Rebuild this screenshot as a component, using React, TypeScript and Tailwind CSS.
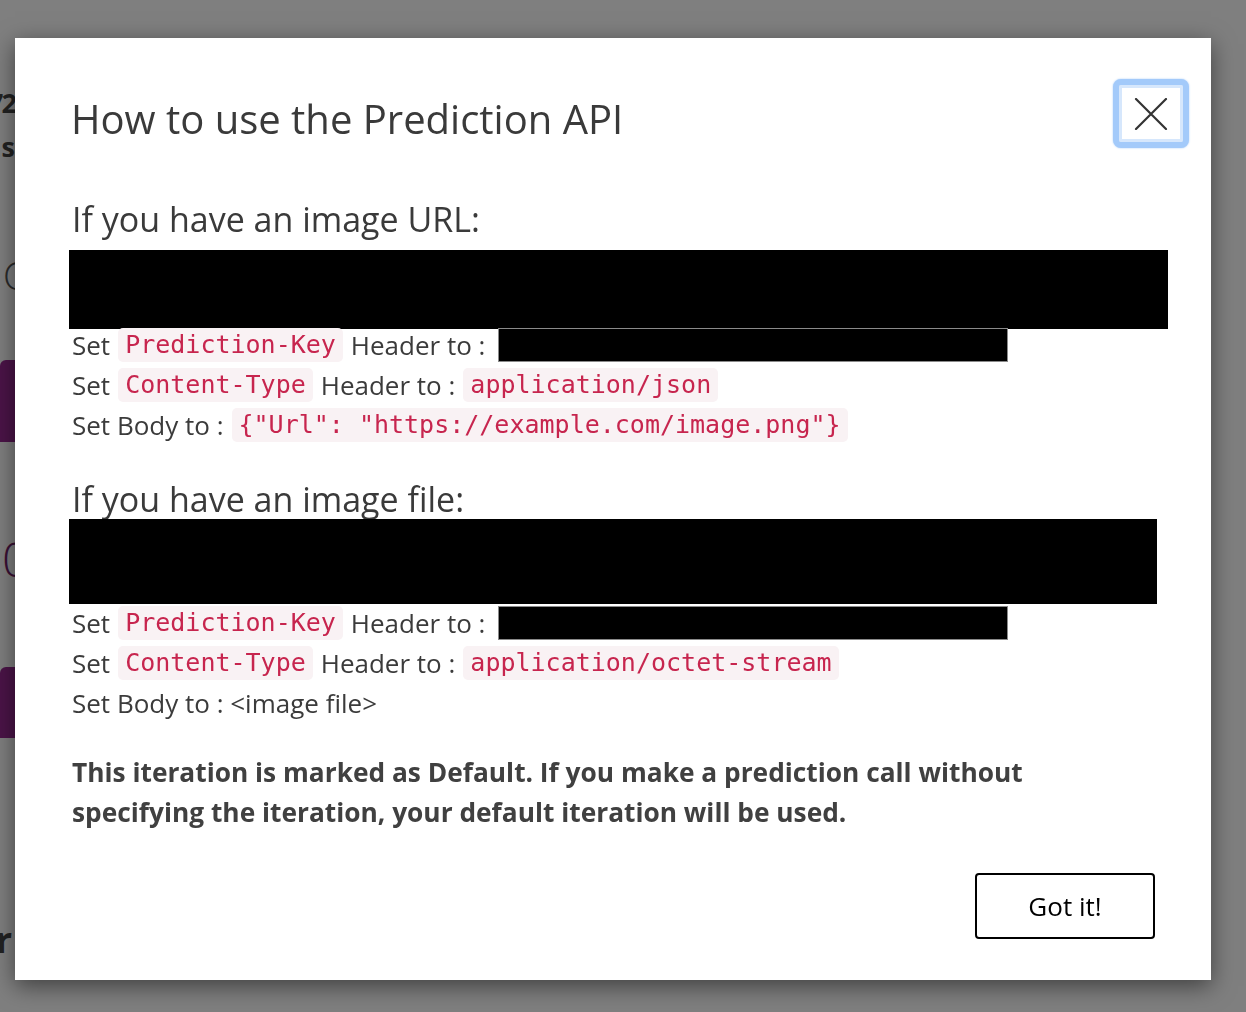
import React from 'react';

const code = 'rounded-[5px] bg-[#f9f2f4] px-[7px] leading-[34px] text-[#c7254e] text-[25px]';

function Code({ children }: { children: React.ReactNode }) {
  return (
    <span className={code} style={{ fontFamily: '"DejaVu Sans Mono", monospace' }}>
      {children}
    </span>
  );
}

function Row({ children }: { children: React.ReactNode }) {
  return <div className="flex h-10 items-center gap-[8px] whitespace-nowrap">{children}</div>;
}

function Section({ title, box, rowsOffset, type, body }: {
  title: string;
  box: string;
  rowsOffset: string;
  type: string;
  body: React.ReactNode;
}) {
  return (
    <div className="flex flex-col">
      <h2 className="pl-[3px] text-[34px] leading-[40px] text-[#3a3a3a]">{title}</h2>
      <div className={`${box} bg-black`} />
      <div className={`${rowsOffset} flex flex-col pl-[3px]`}>
        <Row>
          <span>Set</span>
          <Code>Prediction-Key</Code>
          <span>Header to :</span>
          <div className="ml-[5px] h-[34px] w-[510px] border border-[#8a8a8a] bg-black" />
        </Row>
        <Row>
          <span>Set</span>
          <Code>Content-Type</Code>
          <span>Header to :</span>
          <Code>{type}</Code>
        </Row>
        <Row>{body}</Row>
      </div>
    </div>
  );
}

export default function App() {
  return (
    <div
      className="relative h-[1012px] w-full overflow-hidden bg-[#7f7f7f]"
      style={{ fontFamily: '"Open Sans", "Noto Sans", sans-serif' }}
    >
      {/* page behind the overlay, only its left edge shows */}
      <div className="flex w-[15px] flex-col overflow-hidden text-[#222]">
        <div className="mt-[90px] flex h-[26px] justify-end">
          <span className="whitespace-nowrap text-[27px] font-bold leading-[26px] tracking-[-2px]">v72</span>
        </div>
        <div className="mt-[18px] flex h-[26px] justify-end">
          <span className="whitespace-nowrap text-[27px] font-bold leading-[26px]">Iterations</span>
        </div>
        <div className="mt-[98px] flex h-[34px] justify-start pl-[3px]">
          <span className="whitespace-nowrap text-[38px] font-light leading-[34px] text-[#2a2a2a]">C</span>
        </div>
        <div className="mt-[68px] h-[82px] rounded-tl-[6px] bg-[#4b1448]" />
        <div className="mt-[96px] flex h-[42px] justify-start pl-[2px]">
          <span className="whitespace-nowrap text-[48px] font-light leading-[42px] text-[#3a1035]">0</span>
        </div>
        <div className="mt-[87px] h-[71px] rounded-tl-[6px] bg-[#4b1448]" />
        <div className="mt-[187px] flex h-[30px] justify-end pr-[3px]">
          <span className="whitespace-nowrap text-[36px] font-bold leading-[30px]">r</span>
        </div>
      </div>

      {/* dialog */}
      <div className="fixed left-[15px] top-[38px] flex h-[942px] w-[1196px] flex-col bg-white pl-[54px] text-[26px] text-[#3b3b3b] shadow-[0_6px_22px_rgba(0,0,0,0.5)]">
        <div className="mt-[41px] flex items-start justify-between pr-[22px]">
          <h1 className="mt-[16px] pl-[2px] text-[40px] leading-[48px] text-[#3a3a3a]">How to use the Prediction API</h1>
          <button className="flex h-[69px] w-[76px] items-center justify-center rounded-[8px] border-[6px] border-[#a3cafa] bg-white shadow-[inset_0_0_0_3px_#d6e7fc,0_0_2px_#a3cafa]">
            <svg width="34" height="32" viewBox="0 0 34 32" fill="none" stroke="#333" strokeWidth="2.2" strokeLinecap="round">
              <path d="M2 1 L32 31 M32 1 L2 31" />
            </svg>
          </button>
        </div>

        <div className="mt-[51px] pr-[43px]">
          <Section
            title="If you have an image URL:"
            box="w-[1099px] h-[79px] mt-[11px]"
            rowsOffset="-mt-[4px]"
            type="application/json"
            body={
              <>
                <span>Set Body to :</span>
                <Code>{'{"Url": "https://example.com/image.png"}'}</Code>
              </>
            }
          />
        </div>

        <div className="mt-[34px] pr-[43px]">
          <Section
            title="If you have an image file:"
            box="w-[1088px] h-[85px]"
            rowsOffset="-mt-[1px]"
            type="application/octet-stream"
            body={<span>Set Body to : &lt;image file&gt;</span>}
          />
        </div>

        <p className="mt-[29px] w-[975px] pl-[3px] text-[26.3px] font-bold leading-[40px] text-[#404040]">
          This iteration is marked as Default. If you make a prediction call without specifying the iteration, your
          default iteration will be used.
        </p>

        <div className="mt-[41px] flex justify-end pr-[56px]">
          <button className="h-[66px] w-[180px] rounded-[4px] border-2 border-black bg-white text-[26px] text-black">
            Got it!
          </button>
        </div>
      </div>
    </div>
  );
}
